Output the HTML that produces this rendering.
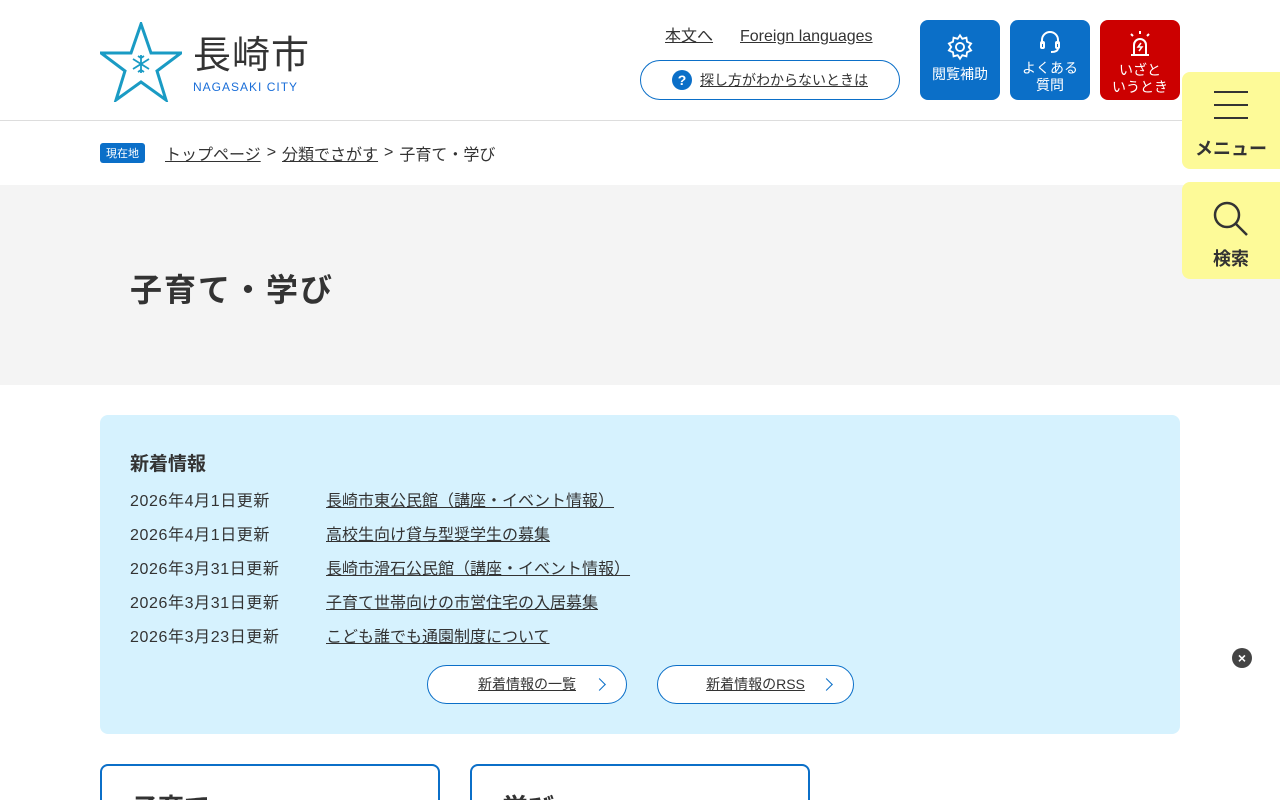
<!DOCTYPE html>
<html><head><meta charset="utf-8">
<style>
*{margin:0;padding:0;box-sizing:border-box}
html,body{width:1280px;height:800px;overflow:hidden}
body{background:#fff;font-family:"Liberation Sans","Noto Sans CJK JP",sans-serif;color:#333;position:relative}
a{color:#333}
.hdr{height:121px;border-bottom:1px solid #ddd;position:relative}
.logo{position:absolute;left:100px;top:22px}
.lt{position:absolute;left:193px;top:34px;font-size:38px;color:#333;letter-spacing:1px;line-height:44px}
.ls{position:absolute;left:193px;top:80px;font-size:12px;color:#1a6ed8;letter-spacing:1px}
.tl{position:absolute;top:27px;font-size:16px;line-height:20px;text-decoration:underline}
.help{position:absolute;left:640px;top:60px;width:260px;height:40px;border:1px solid #0b6fc8;border-radius:20px;font-size:14px;display:flex;align-items:center;justify-content:center;gap:8px}
.help i{width:20px;height:20px;border-radius:50%;background:#0b6fc8;color:#fff;font-style:normal;font-weight:bold;font-size:14px;text-align:center;line-height:20px}
.help span{text-decoration:underline}
.bt{position:absolute;top:20px;width:80px;height:80px;border-radius:8px;color:#fff;font-size:14px;text-align:center;line-height:17px}
.bt svg{display:block;margin:10px auto 4px}
.side{position:absolute;right:0;width:98px;background:#fdfa98;border-radius:8px 0 0 8px;text-align:center;font-weight:bold;font-size:18px;color:#333;z-index:5}
.crumb{position:absolute;top:141px;left:100px;font-size:16px;display:flex;align-items:center}
.crumb b{background:#0b6fc8;color:#fff;font-size:11px;font-weight:normal;padding:2px 6px;border-radius:3px;margin-right:20px}
.crumb a{text-decoration:underline}
.crumb .s{margin:0 6px}
.hero{position:absolute;top:185px;left:0;width:1280px;height:200px;background:#f4f4f4}
.hero h1{position:absolute;left:130px;top:80px;font-size:32px;font-weight:bold;letter-spacing:2px}
.news{position:absolute;left:100px;top:415px;width:1080px;height:319px;background:#d6f2fe;border-radius:8px}
.news h2{position:absolute;left:30px;top:34px;font-size:19px;font-weight:bold}
.row{position:absolute;left:30px;font-size:16px;letter-spacing:.6px}
.row a{position:absolute;left:196px;white-space:nowrap;text-decoration:underline;letter-spacing:0}
.pb{position:absolute;top:250px;height:39px;border:1px solid #0b6fc8;border-radius:20px;background:#fff;font-size:14px;text-align:center;line-height:37px}
.pb span{text-decoration:underline}
.pb:after{content:"";position:absolute;right:22px;top:14px;width:8px;height:8px;border-top:1.5px solid #0b6fc8;border-right:1.5px solid #0b6fc8;transform:rotate(45deg)}
.card{position:absolute;top:764px;width:340px;height:60px;border:2px solid #0b6fc8;border-radius:8px}
.card h3{position:absolute;left:30px;top:22px;font-size:26px;font-weight:bold}
.close{position:absolute;left:1232px;top:648px;width:20px;height:20px;border-radius:50%;background:#444;color:#fff;font-size:14px;text-align:center;line-height:20px;font-weight:bold}
</style></head><body>
<div class="hdr">
<svg class="logo" width="82" height="80" viewBox="0 0 82 80"><polygon points="41,2 51,31 81,31 57,49 66,78 41,60 16,78 25,49 1,31 31,31" fill="none" stroke="#1a9bc4" stroke-width="3"/><g stroke="#1a9bc4" stroke-width="1.8" fill="none"><line x1="41" y1="33" x2="41" y2="51"/><line x1="33" y1="37" x2="49" y2="47"/><line x1="49" y1="37" x2="33" y2="47"/><path d="M38 34l3 2 3-2M38 50l3-2 3 2"/></g></svg>
<div class="lt">長崎市</div>
<div class="ls">NAGASAKI CITY</div>
<a class="tl" style="left:665px">本文へ</a>
<a class="tl" style="left:740px">Foreign languages</a>
<div class="help"><i>?</i><span>探し方がわからないときは</span></div>
<div class="bt" style="left:920px;background:#0b6fc8"><svg style="margin-top:13px;margin-bottom:5px" width="28" height="28" viewBox="0 0 24 24" fill="none" stroke="#fff" stroke-width="1.6"><circle cx="12" cy="12" r="3.5"/><path d="M12 2l2 3 3.5-1 .5 3.5 3.5 1.5-2 3 2 3-3.5 1.5-.5 3.5-3.5-1-2 3-2-3-3.5 1-.5-3.5L2.5 15l2-3-2-3L6 7.5 6.5 4 10 5z"/></svg>閲覧補助</div>
<div class="bt" style="left:1010px;background:#0b6fc8"><svg width="24" height="26" viewBox="0 0 24 26" fill="none" stroke="#fff" stroke-width="2"><path d="M4 14V10a8 8 0 0116 0v4"/><rect x="3" y="12" width="3" height="6" rx="1"/><rect x="18" y="12" width="3" height="6" rx="1"/><path d="M20 18c0 3-3 4-7 4"/></svg>よくある<br>質問</div>
<div class="bt" style="left:1100px;background:#cc0000"><svg width="26" height="28" viewBox="0 0 26 28" fill="none" stroke="#fff" stroke-width="2"><path d="M13 1v3M4 4l2 2M22 4l-2 2"/><path d="M7 24V15a6 6 0 0112 0v9"/><path d="M4 25h18"/><path d="M14 13l-3 4h4l-3 4" stroke-width="1.5"/></svg>いざと<br>いうとき</div>
</div>
<div class="side" style="top:72px;height:97px"><div style="margin:19px auto 0;width:34px;height:28px;border-top:2px solid #333;border-bottom:2px solid #333;position:relative"><div style="position:absolute;top:11px;left:0;width:34px;height:2px;background:#333"></div></div><div style="margin-top:16px">メニュー</div></div>
<div class="side" style="top:182px;height:97px"><svg style="margin-top:18px" width="38" height="38" viewBox="0 0 38 38" fill="none" stroke="#333" stroke-width="2.5"><circle cx="15" cy="15" r="12"/><path d="M24 24l11 11"/></svg><div style="margin-top:2px">検索</div></div>
<div class="crumb"><b>現在地</b><a>トップページ</a><span class="s">&gt;</span><a>分類でさがす</a><span class="s">&gt;</span>子育て・学び</div>
<div class="hero"><h1>子育て・学び</h1></div>
<div class="news">
<h2>新着情報</h2>
<div class="row" style="top:72px">2026年4月1日更新<a>長崎市東公民館（講座・イベント情報）</a></div>
<div class="row" style="top:106px">2026年4月1日更新<a>高校生向け貸与型奨学生の募集</a></div>
<div class="row" style="top:140px">2026年3月31日更新<a>長崎市滑石公民館（講座・イベント情報）</a></div>
<div class="row" style="top:174px">2026年3月31日更新<a>子育て世帯向けの市営住宅の入居募集</a></div>
<div class="row" style="top:208px">2026年3月23日更新<a>こども誰でも通園制度について</a></div>
<div class="pb" style="left:327px;width:200px"><span>新着情報の一覧</span></div>
<div class="pb" style="left:557px;width:197px"><span>新着情報のRSS</span></div>
</div>
<div class="close">×</div>
<div class="card" style="left:100px"><h3>子育て</h3></div>
<div class="card" style="left:470px"><h3>学び</h3></div>
</body></html>
